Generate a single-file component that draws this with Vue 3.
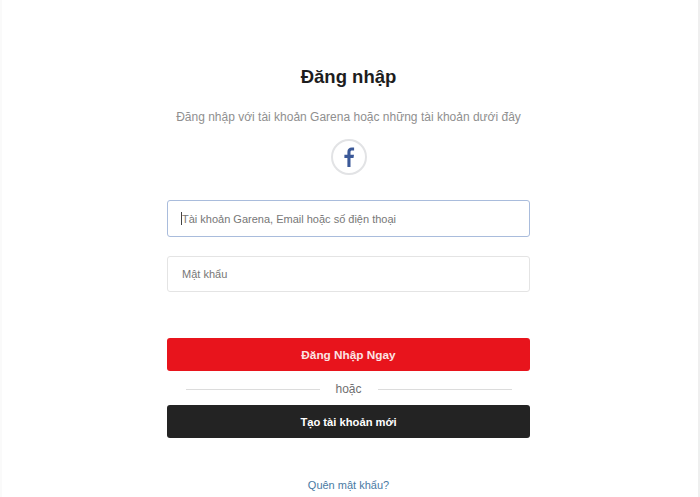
<script setup>
import { ref } from "vue";

let account = ref("");
let password = ref("");
</script>

<template>
  <div class="page">
    <div class="login">
      <h1 class="title">Đăng nhập</h1>
      <p class="sub">Đăng nhập với tài khoản Garena hoặc những tài khoản dưới đây</p>
      <a class="fb" href="#" aria-label="Facebook">
        <svg width="12" height="20" viewBox="0 0 12 20">
          <path
            fill="#3b5998"
            d="M7.5 20V11h3l.5-3.200H7.500V5.300c0-1 .3-1.700 1.700-1.700h1.900V.6C10.800.5 9.800.4 8.800.4 6.100.4 4.400 2 4.400 4.900v2.900H1.400V11h3v9z"
          />
        </svg>
      </a>
      <div class="field first">
        <span class="caret"></span>
        <input v-model="account" class="input focus" type="text" placeholder="Tài khoản Garena, Email hoặc số điện thoại" />
      </div>
      <div class="field second">
        <input v-model="password" class="input" type="password" placeholder="Mật khẩu" />
      </div>
      <button class="btn red">Đăng Nhập Ngay</button>
      <div class="or">
        <span class="line"></span>
        <span class="or-text">hoặc</span>
        <span class="line"></span>
      </div>
      <button class="btn dark">Tạo tài khoản mới</button>
      <a class="forgot" href="#">Quên mật khẩu?</a>
    </div>
  </div>
</template>

<style>
html,
body {
  margin: 0;
  background: #fff;
}
</style>

<style scoped>
.page {
  box-sizing: border-box;
  width: 700px;
  height: 497px;
  overflow: hidden;
  background: #fff;
  border-left: 2px solid #fafafa;
  border-right: 2px solid #efefef;
  font-family: "Liberation Sans", Arial, sans-serif;
  display: flex;
  justify-content: center;
}

.login {
  width: 363px;
  margin-left: -3px;
  display: flex;
  flex-direction: column;
  align-items: center;
  padding-top: 66px;
}

.title {
  margin: 0;
  font-size: 18.5px;
  line-height: 22px;
  font-weight: 700;
  color: #1d1d1d;
}

.sub {
  margin: 18px 0 0;
  font-size: 12px;
  line-height: 22px;
  color: #8f8f8f;
  white-space: nowrap;
}

.fb {
  box-sizing: border-box;
  width: 36px;
  height: 36px;
  margin-top: 11px;
  border: 2px solid #e2e3e5;
  border-radius: 50%;
  display: flex;
  align-items: center;
  justify-content: center;
}

.field {
  position: relative;
  width: 100%;
}

.first {
  margin-top: 25px;
}

.second {
  margin-top: 19px;
}

.caret {
  position: absolute;
  left: 14px;
  top: 12px;
  width: 1px;
  height: 13px;
  background: #444;
}

.input {
  box-sizing: border-box;
  display: block;
  width: 100%;
  height: 37px;
  padding: 0 14px;
  border: 1px solid #e4e4e4;
  border-radius: 3px;
  outline: none;
  background: #fff;
  font-family: inherit;
  font-size: 11px;
  color: #555;
}

.input::placeholder {
  color: #777;
  opacity: 1;
}

.input.focus {
  border: 1.5px solid #a9bcdc;
}

.second .input {
  height: 36px;
}

.btn {
  display: block;
  width: 100%;
  height: 33px;
  padding: 0;
  border: none;
  border-radius: 3px;
  font-family: inherit;
  font-size: 12px;
  font-weight: 700;
  color: #fff;
  cursor: pointer;
}

.red {
  margin-top: 46px;
  background: #e8141c;
  color: #fbe4e4;
  font-size: 11.8px;
}

.dark {
  background: #232323;
  font-size: 11.2px;
}

.or {
  box-sizing: border-box;
  width: 326px;
  height: 34px;
  padding-top: 3px;
  display: flex;
  align-items: center;
  gap: 14px;
}

.line {
  flex: 1;
  height: 1px;
  background: #dcdcdc;
}

.or-text {
  width: 30px;
  margin-top: -2px;
  text-align: center;
  font-size: 12px;
  color: #6f6f6f;
}

.forgot {
  margin-top: 39px;
  font-size: 11px;
  line-height: 16px;
  color: #4a7aa3;
  text-decoration: none;
}
</style>
